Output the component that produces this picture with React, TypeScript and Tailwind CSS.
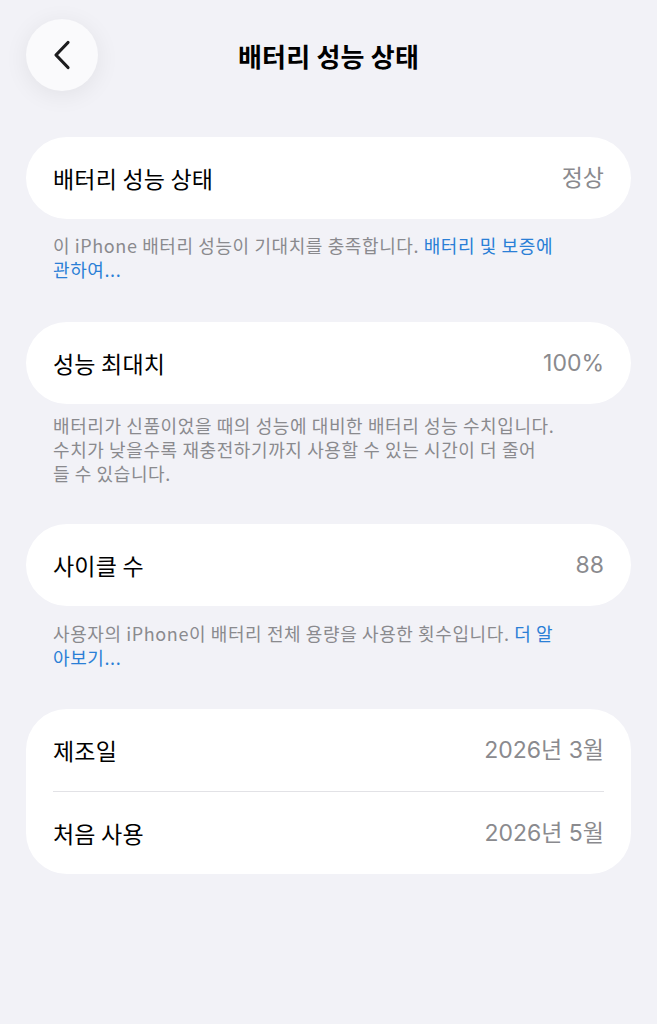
import React from "react";

const FONT = { fontFamily: '"Noto Sans CJK KR", "Noto Sans", sans-serif' };
const VALUE_FONT = { fontFamily: 'Inter, "Noto Sans CJK KR", sans-serif' };

function Row({ label, value }: { label: string; value: string }) {
  return (
    <div className="flex h-[82px] items-center justify-between px-[27px]">
      <span className="text-[23px] text-black tracking-[0.2px]">{label}</span>
      <span className="text-[23px] text-[#8a8a8e]" style={VALUE_FONT}>
        {value}
      </span>
    </div>
  );
}

function Card({ children }: { children: React.ReactNode }) {
  return <div className="rounded-[41px] bg-white">{children}</div>;
}

export default function App() {
  return (
    <div className="min-h-[1024px] w-full bg-[#f2f2f7]" style={FONT}>
      {/* nav bar */}
      <div className="relative flex h-[110px] items-start pl-[26px] pt-[19px]">
        <button className="flex h-[72px] w-[72px] items-center justify-center rounded-full bg-[#fafafc] shadow-[0_4px_24px_rgba(0,0,0,0.07)]">
          <svg width="20" height="30" viewBox="0 0 20 30" fill="none">
            <path
              d="M16 2.5 L4 15 L16 27.5"
              stroke="#1c1c1e"
              strokeWidth="3.2"
              strokeLinecap="round"
              strokeLinejoin="round"
            />
          </svg>
        </button>
        <div className="pointer-events-none absolute left-0 right-0 top-[19px] flex h-[72px] items-center justify-center">
          <span className="text-[26px] font-bold text-black tracking-[0.2px]">배터리 성능 상태</span>
        </div>
      </div>

      <div className="px-[26px] pt-[27px]">
        <Card>
          <Row label="배터리 성능 상태" value="정상" />
        </Card>
        <p className="mt-[14px] px-[27px] text-[18px] leading-[24px] text-[#8a8a8e] tracking-[0.6px]">
          이 iPhone 배터리 성능이 기대치를 충족합니다.{" "}
          <span className="text-[#2a7fd6]">배터리 및 보증에</span>
          <br />
          <span className="text-[#2a7fd6]">관하여...</span>
        </p>

        <div className="mt-[41px]">
          <Card>
            <Row label="성능 최대치" value="100%" />
          </Card>
        </div>
        <p className="mt-[9px] px-[27px] text-[18px] leading-[24px] text-[#8a8a8e] tracking-[0.6px]">
          배터리가 신품이었을 때의 성능에 대비한 배터리 성능 수치입니다.
          <br />
          수치가 낮을수록 재충전하기까지 사용할 수 있는 시간이 더 줄어
          <br />
          들 수 있습니다.
        </p>

        <div className="mt-[39px]">
          <Card>
            <Row label="사이클 수" value="88" />
          </Card>
        </div>
        <p className="mt-[15px] px-[27px] text-[18px] leading-[24px] text-[#8a8a8e] tracking-[0.6px]">
          사용자의 iPhone이 배터리 전체 용량을 사용한 횟수입니다.{" "}
          <span className="text-[#2a7fd6]">더 알</span>
          <br />
          <span className="text-[#2a7fd6]">아보기...</span>
        </p>

        <div className="mt-[40px]">
          <Card>
            <Row label="제조일" value="2026년 3월" />
            <div className="mx-[27px] h-px bg-[#e2e2e6]" />
            <Row label="처음 사용" value="2026년 5월" />
          </Card>
        </div>
      </div>
    </div>
  );
}
